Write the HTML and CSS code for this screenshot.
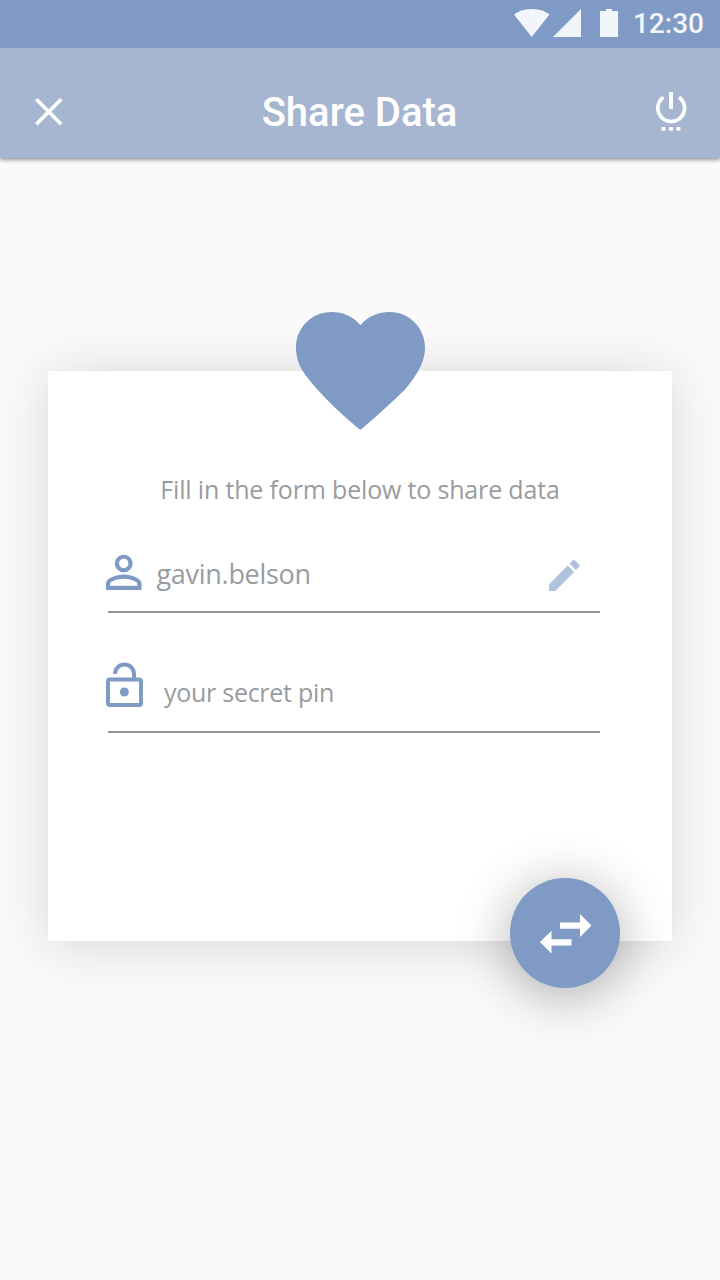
FILE: index.html
```html
<!DOCTYPE html>
<html lang="en">
<head>
<meta charset="utf-8">
<title>Share Data</title>
<link rel="stylesheet" href="styles.css">
</head>
<body>
<div class="status-bar">
  <svg class="wifi" width="36" height="28" viewBox="0 0 36 28"><path d="M0 5.5C10-1.8 25.500-1.800 35.500 5.500L17.700 28Z"/></svg>
  <svg class="signal" width="28" height="28" viewBox="0 0 28 28"><path d="M28 0V28H0Z"/></svg>
  <svg class="battery" width="18" height="28" viewBox="0 0 18 28"><path d="M6 0h6v2h6v26H0V2h6Z"/></svg>
  <span class="time">12:30</span>
</div>
<header class="app-bar">
  <svg class="close" width="28" height="28" viewBox="0 0 28 28"><path d="M1.300 1.300 26.200 26.200M26.200 1.300 1.300 26.200"/></svg>
  <h1 class="title">Share Data</h1>
  <svg class="power" width="32" height="40" viewBox="0 0 32 40"><path class="ring" d="M7.400 5.200A13.400 13.400 0 1 0 23 5.200"/><path class="marks" d="M13 0h4v17h-4zM5.500 35h4v3.700h-4zM13 35h4v3.700h-4zM20.500 35h4v3.700h-4z"/></svg>
</header>
<main class="content">
  <section class="card">
    <svg class="heart" width="129" height="118" viewBox="0 0 129 118"><path d="M64.400 13.300C57 4 46.500 0 35.500 0 15.500 0 0 16 0 35.500 0 44 2.500 52.500 7 59.500 17 74.500 40 98 64.400 118 81 104 96 90 109 77.500 117 68 129 52.500 129 36 129 16 113.500 0 93.500 0 82.500 0 72 4 64.400 13.300Z"/></svg>
    <p class="intro">Fill in the form below to share data</p>
    <form class="fields">
      <div class="field">
        <svg class="person" width="35.500" height="36" viewBox="4 3.700 16 16.300" preserveAspectRatio="none"><path d="M12 5.900c1.160 0 2.100.940 2.100 2.100s-.940 2.100-2.100 2.100S9.900 9.160 9.900 8s.940-2.100 2.100-2.100m0 9c2.970 0 6.100 1.460 6.100 2.100v1.100H5.900V17c0-.640 3.130-2.100 6.100-2.100M12 4C9.790 4 8 5.790 8 8s1.790 4 4 4 4-1.790 4-4-1.790-4-4-4zm0 9c-2.670 0-8 1.340-8 4v3h16v-3c0-2.660-5.330-4-8-4z"/></svg>
        <span class="value name">gavin.belson</span>
        <svg class="edit" width="30.500" height="31" viewBox="3 3 18 18" preserveAspectRatio="none"><path d="M3 17.250V21h3.750L17.810 9.940l-3.750-3.750L3 17.250zM20.710 7.040c.390-.390.390-1.020 0-1.410l-2.340-2.340c-.390-.390-1.020-.390-1.410 0l-1.830 1.830 3.750 3.750 1.830-1.830z"/></svg>
      </div>
      <div class="field">
        <svg class="lock" width="37" height="45" viewBox="0 0 37 45"><rect x="2" y="17.500" width="33" height="25.500" rx="2"/><path d="M9 12V11.700a9.500 9.200 0 0 1 19 0v6"/><circle cx="18.400" cy="30" r="4.500"/></svg>
        <span class="value pin">your secret pin</span>
      </div>
    </form>
    <button class="fab" type="button" aria-label="Share">
      <svg width="52" height="40" viewBox="0 0 52 40"><path d="M20 8.500h20V0l11.500 11.500L40 23v-8.300H20zM31.500 31.500H11.500V39.500L0 28l11.500-11.300v8.600h20z"/></svg>
    </button>
  </section>
</main>
</body>
</html>
```

FILE: styles.css
```css
* { box-sizing: border-box; }
body {
  margin: 0;
  min-height: 1280px;
  background: #fafafa;
  font-family: "Open Sans", "Noto Sans", sans-serif;
}
svg { display: block; flex: none; }
.status-bar {
  position: relative;
  z-index: 1;
  display: flex;
  justify-content: flex-end;
  height: 48px;
  padding: 9px 16px 0 0;
  background: #7f9ac5;
  color: #f2f5fa;
  fill: #f2f5fa;
}
.signal { margin-left: 3px; }
.battery { margin-left: 19px; }
.time {
  margin: 1px 0 0 15px;
  font: 500 28px/28px Roboto, sans-serif;
}
.app-bar {
  display: flex;
  justify-content: space-between;
  height: 110px;
  padding: 44px 32px 0 35px;
  background: #a6b6d1;
  box-shadow: 0 2px 4px rgba(0, 0, 0, 0.4);
}
.close {
  margin-top: 6px;
  fill: none;
  stroke: #fff;
  stroke-width: 3.7;
}
.title {
  margin: 1px 0 0;
  color: #fff;
  font: 500 40px/40px Roboto, sans-serif;
}
.ring { fill: none; stroke: #fff; stroke-width: 3.7; }
.marks { fill: #fff; }
.content { padding: 213px 48px 0; }
.card {
  position: relative;
  height: 570px;
  padding: 100px 58px 0;
  background: #fff;
  box-shadow: 0 4px 50px rgba(0, 0, 0, 0.145);
}
.heart {
  position: absolute;
  top: -59px;
  left: 248px;
  fill: #7f9ac5;
}
.intro {
  margin: 0;
  color: #989c9f;
  font-size: 25px;
  letter-spacing: -0.170px;
  line-height: 36px;
  text-align: center;
  white-space: nowrap;
}
.fields { padding-top: 47px; }
.field {
  display: flex;
  width: 494px;
  height: 59px;
  background: linear-gradient(#92979c, #92979c) 2px 100% / 492px 2px no-repeat;
}
.field + .field { height: 75px; margin-top: 45px; }
.value { color: #989c9f; white-space: nowrap; }
.name {
  margin-left: 15px;
  font-size: 27px;
  letter-spacing: -0.290px;
  line-height: 40px;
}
.pin {
  margin: 16px 0 0 21px;
  font-size: 25px;
  letter-spacing: -0.270px;
  line-height: 36px;
}
.person { fill: #7f9ac5; }
.edit { margin: 6px 20.500px 0 auto; fill: #b0c1dd; }
.lock { margin-top: 4px; fill: none; stroke: #7f9ac5; stroke-width: 4; }
.lock circle { fill: #7f9ac5; stroke: none; }
.fab {
  position: absolute;
  top: 507px;
  left: 462px;
  display: flex;
  align-items: center;
  justify-content: center;
  width: 110px;
  height: 110px;
  padding: 1px 0 0 1px;
  border: 0;
  border-radius: 50%;
  background: #7f9ac5;
  fill: #fff;
  box-shadow: 0 8px 54px rgba(0, 0, 0, 0.32);
}
```
